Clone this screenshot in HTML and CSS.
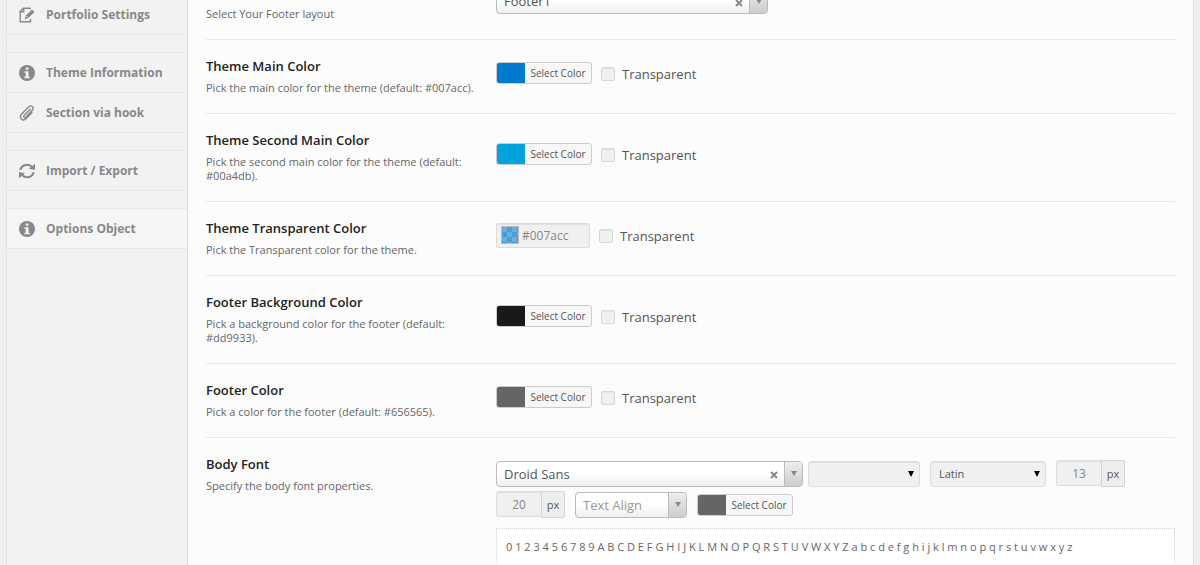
FILE: index.html
```html
<!DOCTYPE html>
<html lang="en">
  <head>
    <meta charset="UTF-8" />
    <meta name="viewport" content="width=device-width, initial-scale=1.0" />
    <title>Theme Options</title>
    <link rel="stylesheet" href="styles.css">
  </head>
  <body>
    <div class="panel">
      <!-- Sidebar -->
      <nav class="sidebar">
        <a href="#" class="menu-item">
          <svg class="icon" viewBox="0 0 16 16"><path d="M11 2.5V1.2H4.2L1.2 4.2v10.6h10.3v-3M1.5 4.8h3.2V1.5" fill="none" stroke="currentColor" stroke-width="1.4"/><path d="M13 2.6l2.5 2.3-6.2 6-3.6 1.4 1.2-3.7z"/><path d="M7.3 9l1.6 1.6" stroke="#f2f2f2" stroke-width=".8"/></svg>
          Portfolio Settings
        </a>
        <div class="menu-gap"></div>
        <a href="#" class="menu-item first">
          <svg class="icon" viewBox="0 0 16 16"><circle cx="8" cy="8" r="8"/><path d="M6.7 2.4h2.8v2.4H6.7zM5.4 6.2h4.1v5.5h1.3v1.5H5.3v-1.5h1.4v-4H5.4z" fill="#f2f2f2"/></svg>
          Theme Information
        </a>
        <a href="#" class="menu-item">
          <svg class="icon" viewBox="0 0 16 16"><path d="M11.3 4.2L5.1 10.6c-1.2 1.3.4 2.8 1.6 1.6l6.5-6.8c2.7-2.9-1-6-3.6-3.5L2.7 9c-3.3 3.6 1 8 4.6 4.5l5.6-5.9" fill="none" stroke="currentColor" stroke-width="1.4" stroke-linecap="round"/></svg>
          Section via hook
        </a>
        <div class="menu-gap"></div>
        <a href="#" class="menu-item first">
          <svg class="icon" viewBox="0 0 16 16"><path d="M1.2 6.7C2.6 1.6 9.3.1 12.7 3.8M14.8 9.3c-1.4 5.1-8.1 6.6-11.5 2.9" fill="none" stroke="currentColor" stroke-width="2.1"/><path d="M16 .8v6.1l-6-1.2zM0 15.2V9.1l6 1.2z"/></svg>
          Import / Export
        </a>
        <div class="menu-gap"></div>
        <a href="#" class="menu-item first active">
          <svg class="icon" viewBox="0 0 16 16"><circle cx="8" cy="8" r="8"/><path d="M6.7 2.4h2.8v2.4H6.7zM5.4 6.2h4.1v5.5h1.3v1.5H5.3v-1.5h1.4v-4H5.4z" fill="#f2f2f2"/></svg>
          Options Object
        </a>
      </nav>

      <!-- Options -->
      <main class="content">
        <div class="row row-top">
          <div class="info">
            <p>Select Your Footer layout</p>
          </div>
          <div class="control">
            <div class="select2 footer-select">
              <select aria-label="Footer layout"><option>Footer1</option></select>
              <button class="clear" aria-label="Clear"><svg viewBox="0 0 8 8"><path d="M1 1l6 6M7 1L1 7"/></svg></button>
              <span class="arrow"></span>
            </div>
          </div>
        </div>

        <div class="row">
          <div class="info">
            <h3>Theme Main Color</h3>
            <p>Pick the main color for the theme (default: #007acc).</p>
          </div>
          <div class="control">
            <button class="color-btn"><span class="swatch blue"></span><span class="color-text">Select Color</span></button>
            <label class="check"><input type="checkbox" /> Transparent</label>
          </div>
        </div>

        <div class="row">
          <div class="info">
            <h3>Theme Second Main Color</h3>
            <p>Pick the second main color for the theme (default: #00a4db).</p>
          </div>
          <div class="control">
            <button class="color-btn"><span class="swatch light-blue"></span><span class="color-text">Select Color</span></button>
            <label class="check"><input type="checkbox" /> Transparent</label>
          </div>
        </div>

        <div class="row">
          <div class="info">
            <h3>Theme Transparent Color</h3>
            <p>Pick the Transparent color for the theme.</p>
          </div>
          <div class="control">
            <div class="alpha-field">
              <span class="alpha-swatch"></span>
              <input type="text" value="#007acc" aria-label="Theme Transparent Color" />
            </div>
            <label class="check"><input type="checkbox" /> Transparent</label>
          </div>
        </div>

        <div class="row">
          <div class="info">
            <h3>Footer Background Color</h3>
            <p>Pick a background color for the footer (default: #dd9933).</p>
          </div>
          <div class="control">
            <button class="color-btn"><span class="swatch black"></span><span class="color-text">Select Color</span></button>
            <label class="check"><input type="checkbox" /> Transparent</label>
          </div>
        </div>

        <div class="row">
          <div class="info">
            <h3>Footer Color</h3>
            <p>Pick a color for the footer (default: #656565).</p>
          </div>
          <div class="control">
            <button class="color-btn"><span class="swatch gray"></span><span class="color-text">Select Color</span></button>
            <label class="check"><input type="checkbox" /> Transparent</label>
          </div>
        </div>

        <div class="row row-font">
          <div class="info">
            <h3>Body Font</h3>
            <p>Specify the body font properties.</p>
          </div>
          <div class="font-control">
            <div class="font-line">
              <div class="font-family">
                <div class="select2 family-select">
                  <select aria-label="Font family"><option>Droid Sans</option></select>
                  <button class="clear" aria-label="Clear"><svg viewBox="0 0 8 8"><path d="M1 1l6 6M7 1L1 7"/></svg></button>
                  <span class="arrow"></span>
                </div>
                <select class="plain-select" aria-label="Font style"><option></option></select>
              </div>
              <select class="plain-select subset" aria-label="Font subset"><option>Latin</option></select>
              <div class="unit-field">
                <input type="text" value="13" aria-label="Font size" />
                <span class="unit">px</span>
              </div>
            </div>
            <div class="font-line">
              <div class="unit-field">
                <input type="text" value="20" aria-label="Line height" />
                <span class="unit">px</span>
              </div>
              <div class="select2 align-select">
                <select aria-label="Text align"><option>Text Align</option></select>
                <span class="arrow"></span>
              </div>
              <button class="color-btn"><span class="swatch gray"></span><span class="color-text">Select Color</span></button>
            </div>
            <p class="preview">0 1 2 3 4 5 6 7 8 9 A B C D E F G H I J K L M N O P Q R S T U V W X Y Z a b c d e f g h i j k l m n o p q r s t u v w x y z</p>
          </div>
        </div>
      </main>
    </div>
  </body>
</html>
```
FILE: styles.css
```css
* {
  margin: 0;
  padding: 0;
  box-sizing: border-box;
}
body {
  height: 100vh;
  overflow: hidden;
  background: #efefef;
  font-family: "Open Sans", sans-serif;
  color: #555;
}
button,
input,
select {
  font-family: inherit;
  color: inherit;
}
.panel {
  display: flex;
  min-height: calc(100vh + 12px);
  margin: -12px 6px 0;
  border-left: 1px solid #e2e2e2;
  border-right: 1px solid #dedede;
  background: #fcfcfc;
}

/* Sidebar */
.sidebar {
  flex: 0 0 181px;
  padding-top: 7px;
  background: #f2f2f2;
  border-right: 1px solid #e0e0e0;
}
.menu-item {
  display: flex;
  align-items: center;
  gap: 11px;
  height: 40px;
  padding-left: 12px;
  border-bottom: 1px solid #e7e7e7;
  color: #888;
  font-size: 12px;
  font-weight: 700;
  text-decoration: none;
}
.menu-item.first {
  height: 41px;
  border-top: 1px solid #e7e7e7;
}
.menu-item.active {
  background: #f5f5f5;
}
.menu-gap {
  height: 17px;
}
.icon {
  width: 16px;
  height: 16px;
  fill: currentColor;
}

/* Options */
.content {
  flex: 1;
  min-width: 0;
  padding: 0 18px;
}
.row {
  display: grid;
  grid-template-columns: 280px 1fr;
  column-gap: 10px;
  border-bottom: 1px solid #e7e7e7;
}
.info {
  padding: 17px 0 18px;
}
.info h3 {
  margin-bottom: 6px;
  font-size: 13px;
  font-weight: 600;
  line-height: 18px;
  color: #222;
}
.info p {
  font-size: 11px;
  line-height: 14px;
  color: #666;
}
.control {
  display: flex;
  align-items: center;
  gap: 9px;
  padding-bottom: 7px;
}
.row-top .info {
  padding-top: 19px;
}
.row-top .control {
  align-items: flex-start;
}
.row-font {
  border-bottom: none;
}

/* Color picker */
.color-btn {
  display: flex;
  width: 96px;
  height: 22px;
  border: 1px solid #ccc;
  border-radius: 3px;
  background: #f7f7f7;
  overflow: hidden;
  cursor: pointer;
}
.swatch {
  width: 28px;
  height: 20px;
}
.blue {
  background: #007acc;
}
.light-blue {
  background: #00a4db;
}
.black {
  background: #18191b;
}
.gray {
  background: #656565;
}
.color-text {
  flex: 1;
  font-size: 10px;
  line-height: 20px;
  text-align: center;
}
.check {
  display: flex;
  align-items: center;
  gap: 7px;
  padding-top: 2px;
  font-size: 13px;
  line-height: 18px;
}
.check input {
  appearance: none;
  width: 14px;
  height: 14px;
  border: 1px solid #d8d8d8;
  border-radius: 2px;
  background: #f0f0f0;
  box-shadow: inset 0 1px 1px rgba(0, 0, 0, 0.06);
}
.alpha-field {
  display: flex;
  align-items: center;
  gap: 3px;
  width: 94px;
  height: 25px;
  padding-left: 4px;
  border: 1px solid #ddd;
  border-radius: 2px;
  background: #f0f0f0;
  box-shadow: inset 0 1px 1px rgba(0, 0, 0, 0.07);
}
.alpha-swatch {
  flex: none;
  width: 18px;
  height: 18px;
  border: 1px solid #bbb;
  background: repeating-conic-gradient(#4d9dd3 0 25%, #66b0e2 0 50%) 0 0 / 10px 10px;
}
.alpha-field input {
  width: 60px;
  border: none;
  background: transparent;
  color: #888;
  font-size: 12px;
}

/* Selects */
.select2 {
  display: flex;
  align-items: center;
  height: 26px;
  border: 1px solid #bbb;
  border-radius: 4px;
  background: linear-gradient(#fff 50%, #eee);
  overflow: hidden;
}
.select2 select {
  flex: 1;
  min-width: 0;
  height: 24px;
  padding-left: 7px;
  border: none;
  appearance: none;
  background: transparent;
  font-size: 13px;
}
.footer-select {
  width: 272px;
}
.family-select {
  width: 307px;
}
.align-select {
  width: 112px;
}
.align-select select {
  color: #999;
}
.clear {
  width: 8px;
  height: 8px;
  margin: 3px 6px 0 0;
  border: none;
  background: none;
  cursor: pointer;
}
.clear svg {
  display: block;
  stroke: #888;
  stroke-width: 2;
}
.arrow {
  display: flex;
  align-items: center;
  justify-content: center;
  width: 18px;
  height: 24px;
  border-left: 1px solid #bbb;
  background: linear-gradient(#eee, #ccc);
}
.arrow::after {
  content: "";
  border: 3px solid transparent;
  border-top: 5px solid #888;
  border-bottom: none;
}
.plain-select {
  width: 112px;
  height: 26px;
  padding-left: 8px;
  border: 1px solid #ddd;
  border-radius: 3px;
  appearance: none;
  background: #f0f0f0 url("data:image/svg+xml,%3Csvg xmlns='http://www.w3.org/2000/svg' width='6' height='6'%3E%3Cpath d='M0 0h6L3 6z'/%3E%3C/svg%3E") no-repeat right 5px center;
  box-shadow: inset 0 1px 1px rgba(0, 0, 0, 0.07);
  font-size: 11px;
}
.subset {
  width: 116px;
}

/* Typography */
.font-control {
  padding-top: 22px;
}
.font-line {
  display: flex;
  align-items: center;
  gap: 10px;
  margin-bottom: 4px;
}
.font-family {
  display: flex;
  gap: 5px;
}
.unit-field {
  display: flex;
  height: 27px;
}
.unit-field input {
  width: 45px;
  height: 26px;
  border: 1px solid #ddd;
  border-right: none;
  border-radius: 3px 0 0 3px;
  background: #f0f0f0;
  box-shadow: inset 0 1px 1px rgba(0, 0, 0, 0.07);
  color: #888;
  font-size: 12px;
  text-align: center;
}
.unit {
  width: 24px;
  border: 1px solid #d4d4d4;
  border-radius: 0 2px 2px 0;
  background: #eee;
  font-size: 11px;
  line-height: 25px;
  text-align: center;
}
.preview {
  min-height: 60px;
  margin-top: 10px;
  padding: 9px;
  border: 1px dotted #d3d3d3;
  background: #fff;
  font-size: 11px;
  line-height: 18px;
  color: #666;
}
```
